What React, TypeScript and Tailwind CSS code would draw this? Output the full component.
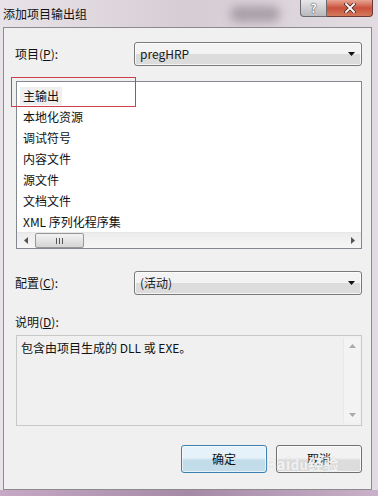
import React from 'react';

const items = ['主输出', '本地化资源', '调试符号', '内容文件', '源文件', '文档文件', 'XML 序列化程序集'];

const font = { fontFamily: '"Noto Sans CJK SC", "Liberation Sans", sans-serif' };

const Combo: React.FC<{ value: string; h: string }> = ({ value, h }) => (
  <div className={`w-[228px] ${h} rounded-[3px] border border-[#7a7a7a] bg-gradient-to-b from-[#f3f3f3] from-50% to-[#dcdcdc] to-50% flex items-center justify-between pl-[5px] pr-[6px] shadow-[inset_0_0_0_1px_rgba(255,255,255,0.7)]`}>
    <span className="text-[12px] text-[#1a1a1a]">{value}</span>
    <svg width="7" height="4" viewBox="0 0 7 4"><path d="M0 0h7L3.5 4z" fill="#111" /></svg>
  </div>
);

const App: React.FC = () => {
  return (
    <div style={font} className="w-[378px] h-[496px] relative overflow-hidden bg-gradient-to-r from-[#e8e3e8] via-[#d6cdd4] to-[#e2dce2]">
      {/* title bar */}
      <div className="h-[27px] flex items-center pl-[3px] relative">
        <div className="absolute left-[230px] top-[6px] w-[50px] h-[16px] rounded-full bg-[#a99fa8] blur-[5px]"></div>
        <span className="text-[12px] text-[#111] relative">添加项目输出组</span>
        <div className="absolute top-0 right-[5px] flex">
          <div className="w-[27px] h-[17px] rounded-bl-[4px] border border-t-0 border-[#6b6b6b] bg-gradient-to-b from-[#e7e7e9] to-[#b9b9bd] flex items-center justify-center">
            <span className="text-[12px] font-bold text-white leading-none" style={{ textShadow: '0 0 1px #333, 0 0 1px #333' }}>?</span>
          </div>
          <div className="w-[46px] h-[17px] rounded-br-[4px] border border-t-0 border-l-0 border-[#6b3b34] bg-gradient-to-b from-[#e8a493] via-[#c9513c] to-[#d3785c] flex items-center justify-center">
            <svg width="12" height="10" viewBox="0 0 12 10">
              <path d="M2 1l8 8M10 1L2 9" stroke="#4a2a25" strokeWidth="3.4" strokeLinecap="square" />
              <path d="M2 1l8 8M10 1L2 9" stroke="#fff" strokeWidth="1.8" strokeLinecap="square" />
            </svg>
          </div>
        </div>
      </div>

      {/* content panel */}
      <div className="ml-[3px] w-[369px] h-[463px] bg-[#f0f0f0] border border-[#8d8a8e] relative text-[12px] text-[#111]">
        {/* project row */}
        <div className="flex items-center mt-[14px] h-[24px]">
          <span className="w-[130px] pl-[11px]">项目(<span className="underline">P</span>):</span>
          <Combo value="pregHRP" h="h-[24px]" />
        </div>

        {/* list box */}
        <div className="ml-[12px] mt-[15px] w-[346px] h-[168px] border border-[#828790] bg-white flex flex-col">
          <div className="flex-1 pt-[3px] pl-[3px]">
            {items.map((t, i) => (
              <div key={t} className="h-[21px] flex items-center">
                <span className={`px-[3px] ${i === 0 ? 'bg-[#efefef]' : ''}`}>{t}</span>
              </div>
            ))}
          </div>
          <div className="h-[17px] bg-gradient-to-b from-[#ececec] to-[#f6f6f6] flex items-center border-t border-[#e6e6e6]">
            <div className="w-[17px] flex justify-center">
              <svg width="4" height="7" viewBox="0 0 4 7"><path d="M4 0v7L0 3.5z" fill="#555" /></svg>
            </div>
            <div className="w-[49px] h-[15px] ml-[1px] rounded-[2px] border border-[#979797] bg-gradient-to-b from-[#f3f3f3] to-[#d5d5d5] flex items-center justify-center gap-[2px]">
              <div className="w-[1px] h-[6px] bg-[#555]"></div>
              <div className="w-[1px] h-[6px] bg-[#555]"></div>
              <div className="w-[1px] h-[6px] bg-[#555]"></div>
            </div>
            <div className="flex-1"></div>
            <div className="w-[17px] flex justify-center">
              <svg width="4" height="7" viewBox="0 0 4 7"><path d="M0 0v7L4 3.5z" fill="#555" /></svg>
            </div>
          </div>
        </div>

        {/* config row */}
        <div className="flex items-center mt-[22px] h-[24px]">
          <span className="w-[130px] pl-[11px]">配置(<span className="underline">C</span>):</span>
          <Combo value="(活动)" h="h-[24px]" />
        </div>

        {/* description */}
        <div className="pl-[11px] mt-[19px] h-[16px] leading-[16px]">说明(<span className="underline">D</span>):</div>
        <div className="ml-[12px] mt-[5px] w-[346px] h-[91px] border border-[#c8c8c8] bg-[#f0f0f0] flex">
          <div className="flex-1 pl-[4px] pt-[3px]">包含由项目生成的 DLL 或 EXE。</div>
          <div className="w-[17px] my-[2px] mr-[1px] bg-[#f3f3f3] border-l border-[#e8e8e8] flex flex-col items-center justify-between py-[6px]">
            <svg width="7" height="4" viewBox="0 0 7 4"><path d="M0 4h7L3.5 0z" fill="#aaa" /></svg>
            <svg width="7" height="4" viewBox="0 0 7 4"><path d="M0 0h7L3.5 4z" fill="#aaa" /></svg>
          </div>
        </div>

        {/* buttons */}
        <div className="flex justify-end gap-[9px] mt-[19px] pr-[9px]">
          <div className="w-[86px] h-[28px] rounded-[3px] border border-[#3c7fb1] bg-gradient-to-b from-[#e6f2f9] from-45% to-[#c2dcea] to-55% flex items-center justify-center shadow-[inset_0_0_0_1px_rgba(255,255,255,0.6)]">
            确定
          </div>
          <div className="w-[86px] h-[28px] rounded-[3px] border border-[#707070] bg-gradient-to-b from-[#f2f2f2] from-45% to-[#dcdcdc] to-55% flex items-center justify-center shadow-[inset_0_0_0_1px_rgba(255,255,255,0.7)]">
            取消
          </div>
        </div>

        {/* annotation box */}
        <div className="absolute left-[7px] top-[49px] w-[125px] h-[30px] border-[1.5px] border-[#d0404c]"></div>

        {/* watermark */}
        <div className="absolute left-[262px] top-[425px] text-[15px] font-bold text-white/80 tracking-wide" style={{ textShadow: '0 0 1px #bbb' }}>
          Bai<span className="text-[13px]">du</span>经验
        </div>
      </div>

      {/* bottom frame */}
      <div className="absolute left-0 right-0 bottom-0 h-[6px] bg-gradient-to-r from-[#c7a9c6] via-[#a58aa6] to-[#c9b1c9]"></div>
    </div>
  );
};

export default App;
